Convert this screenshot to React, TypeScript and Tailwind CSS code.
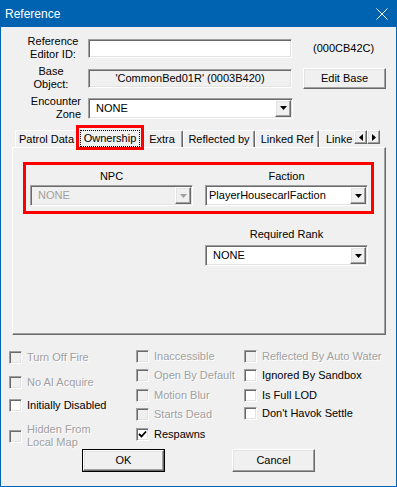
const sunken =
  'border border-t-[#a0a0a0] border-l-[#a0a0a0] border-r-white border-b-white shadow-[inset_1px_1px_0_#696969,inset_-1px_-1px_0_#e3e3e3]'
const raised =
  'border border-t-white border-l-white border-r-[#696969] border-b-[#696969] shadow-[inset_-1px_-1px_0_#a0a0a0,inset_1px_1px_0_#e3e3e3]'
const disabledText = 'text-[#a0a0a0] [text-shadow:1px_1px_0_#fff]'

function DownArrow({ color = '#000' }: { color?: string }) {
  return (
    <svg width="7" height="4" viewBox="0 0 7 4">
      <path d="M0 0H7L3.5 4Z" fill={color} />
    </svg>
  )
}

function Combo({
  value,
  className,
  disabled,
  pad = 'pl-[7px]',
}: {
  value: string
  className: string
  disabled?: boolean
  pad?: string
}) {
  return (
    <div
      className={`flex h-[21px] items-center ${sunken} ${className} ${
        disabled ? 'bg-[#f0f0f0] text-[#a0a0a0]' : 'bg-white'
      }`}
    >
      <span className={`${pad} whitespace-nowrap`}>{value}</span>
      <div className={`ml-auto mr-[1px] flex h-[17px] w-[16px] items-center justify-center bg-[#f0f0f0] ${raised}`}>
        <DownArrow color={disabled ? '#a0a0a0' : '#000'} />
      </div>
    </div>
  )
}

function Check({
  label,
  disabled,
  checked,
  className = '',
  twoLine,
}: {
  label: React.ReactNode
  disabled?: boolean
  checked?: boolean
  className?: string
  twoLine?: boolean
}) {
  return (
    <div className={`flex gap-[5px] ${twoLine ? 'items-center' : 'items-start'} ${className}`}>
      <div
        className={`flex h-[13px] w-[13px] shrink-0 items-center justify-center ${sunken} ${
          disabled ? 'bg-[#f0f0f0]' : 'bg-white'
        }`}
      >
        {checked && (
          <svg width="9" height="9" viewBox="0 0 9 9">
            <path d="M1 4L3.5 6.5L8 1.5" stroke="#000" strokeWidth="1.8" fill="none" />
          </svg>
        )}
      </div>
      <span className={`whitespace-nowrap ${disabled ? disabledText : ''}`}>{label}</span>
    </div>
  )
}

function Tab({ label, w, align = 'justify-center' }: { label: string; w: string; align?: string }) {
  return (
    <div
      className={`flex h-[17px] shrink-0 items-center rounded-t-[2px] border-t border-l border-r border-t-white border-l-white border-r-[#696969] shadow-[inset_-1px_0_0_#a0a0a0] ${align} ${w}`}
    >
      <span className="whitespace-nowrap">{label}</span>
    </div>
  )
}

export default function App() {
  return (
    <div className="flex h-[487px] w-[397px] flex-col overflow-hidden border border-[#0063b1] bg-[#f0f0f0] font-['Liberation_Sans',Arial,sans-serif] text-[11px] leading-[13px] text-black">
      {/* title bar */}
      <div className="flex h-[26px] shrink-0 items-center bg-[#0063b1] pl-[4px] pr-[8px] text-[12px] text-white">
        <span>Reference</span>
        <svg className="ml-auto" width="12" height="12" viewBox="0 0 12 12">
          <path d="M0.5 0.5L11.5 11.5M11.5 0.5L0.5 11.5" stroke="#fff" strokeWidth="1" />
        </svg>
      </div>

      {/* header fields */}
      <div className="mt-[7px] flex flex-col gap-[2px]">
        <div className="flex h-[28px] items-center">
          <div className="ml-[19px] w-[66px] text-center">
            Reference
            <br />
            Editor ID:
          </div>
          <div className={`ml-[2px] h-[19px] w-[204px] bg-white ${sunken}`} />
          <div className="ml-[21px]">(000CB42C)</div>
        </div>

        <div className="flex h-[28px] items-center">
          <div className="ml-[19px] w-[62px] text-center">
            Base
            <br />
            Object:
          </div>
          <div className={`ml-[6px] flex h-[19px] w-[204px] items-center justify-center bg-[#f0f0f0] ${sunken}`}>
            'CommonBed01R' (0003B420)
          </div>
          <div className={`ml-[11px] flex h-[21px] w-[83px] items-center justify-center bg-[#f0f0f0] ${raised}`}>
            Edit Base
          </div>
        </div>

        <div className="flex h-[28px] items-center">
          <div className="ml-[19px] w-[67px] pr-[6px] text-right">
            Encounter
            <br />
            Zone
          </div>
          <Combo value="NONE" className="ml-[1px] w-[205px]" />
        </div>
      </div>

      {/* tab strip */}
      <div className="mt-[3px] flex h-[22px] shrink-0 items-end pl-[14px]">
        <div className="flex w-[339px] items-end overflow-x-clip">
          <Tab label="Patrol Data" w="w-[63px]" />
          <div className="relative z-10 -mr-[3px] -ml-[2px] -mb-[3px] flex h-[25px] w-[68px] shrink-0 justify-center border-[3px] border-[#ff0000] bg-[#f0f0f0] pt-[2px]">
            <span className="h-[17px] border border-dotted border-black px-[3px] leading-[15px]">Ownership</span>
          </div>
          <Tab label="Extra" w="w-[42px]" />
          <Tab label="Reflected by" w="w-[72px]" />
          <Tab label="Linked Ref" w="w-[64px]" />
          <Tab label="Linke" w="w-[40px]" align="justify-start pl-[6px]" />
        </div>
        <div className="mb-[3px] flex self-end">
          <div className={`flex h-[14px] w-[13px] items-center justify-center bg-[#f0f0f0] ${raised}`}>
            <svg width="4" height="7" viewBox="0 0 4 7">
              <path d="M4 0V7L0 3.5Z" fill="#000" />
            </svg>
          </div>
          <div className={`flex h-[14px] w-[13px] items-center justify-center bg-[#f0f0f0] ${raised}`}>
            <svg width="4" height="7" viewBox="0 0 4 7">
              <path d="M0 0V7L4 3.5Z" fill="#000" />
            </svg>
          </div>
        </div>
      </div>

      {/* tab panel */}
      <div className="ml-[11px] h-[188px] w-[374px] shrink-0 border border-t-white border-l-white border-r-[#696969] border-b-[#696969] shadow-[inset_-1px_-1px_0_#a0a0a0]">
        <div className="mt-[14px] ml-[10px] flex h-[52px] w-[351px] gap-[12px] border-[3px] border-[#ff0000] pl-[4px]">
          <div className="flex w-[163px] flex-col">
            <div className="mt-[5px] text-center">NPC</div>
            <Combo value="NONE" className="mt-[2px] w-[163px]" disabled />
          </div>
          <div className="flex w-[163px] flex-col">
            <div className="mt-[5px] text-center">Faction</div>
            <Combo value="PlayerHousecarlFaction" className="mt-[2px] w-[163px]" pad="pl-[3px]" />
          </div>
        </div>
        <div className="mt-[14px] ml-[192px] flex w-[163px] flex-col">
          <div className="text-center">Required Rank</div>
          <Combo value="NONE" className="mt-[4px] w-[163px]" />
        </div>
      </div>

      {/* flags */}
      <div className="mt-[15px] flex h-[99px] shrink-0">
        <div className="flex w-[135px] flex-col pl-[8px]">
          <Check label="Turn Off Fire" disabled className="mt-[1px] h-[25px]" />
          <Check label="No AI Acquire" disabled className="h-[23px]" />
          <Check label="Initially Disabled" className="h-[24px]" />
          <Check
            label={
              <>
                Hidden From
                <br />
                Local Map
              </>
            }
            disabled
            twoLine
          />
        </div>
        <div className="flex w-[108px] flex-col">
          <Check label="Inaccessible" disabled className="h-[19px]" />
          <Check label="Open By Default" disabled className="h-[20px]" />
          <Check label="Motion Blur" disabled className="h-[19px]" />
          <Check label="Starts Dead" disabled className="h-[20px]" />
          <Check label="Respawns" checked />
        </div>
        <div className="flex flex-col">
          <Check label="Reflected By Auto Water" disabled className="h-[19px]" />
          <Check label="Ignored By Sandbox" className="h-[20px]" />
          <Check label="Is Full LOD" className="h-[18px]" />
          <Check label="Don't Havok Settle" />
        </div>
      </div>

      {/* buttons */}
      <div className="flex h-[23px] shrink-0 gap-[67px] pl-[81px]">
        <div className="h-[23px] w-[83px] border border-black">
          <div className={`flex h-full w-full items-center justify-center bg-[#f0f0f0] ${raised}`}>OK</div>
        </div>
        <div className={`flex h-[23px] w-[83px] items-center justify-center bg-[#f0f0f0] ${raised}`}>Cancel</div>
      </div>
    </div>
  )
}
